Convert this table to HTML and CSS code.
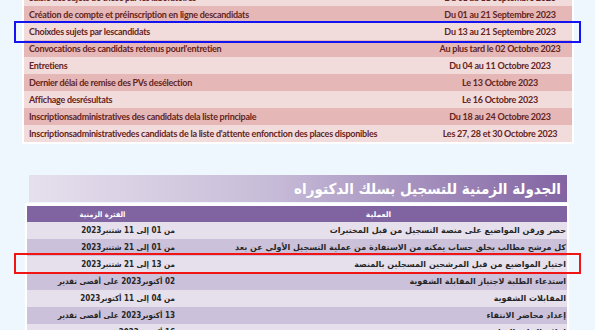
FILE: index.html
```html
<!DOCTYPE html>
<html lang="fr">
<head>
<meta charset="utf-8">
<link rel="stylesheet" href="styles.css">
</head>
<body>
<div class="fr-panel">
  <div class="fr-row light"><span class="op">Saisie des sujets de thèse par les laboratoires</span><span class="dt">Du 01 au 11 Septembre 2023</span></div>
  <div class="fr-row dark"><span class="op">Création de compte et préinscription en ligne descandidats</span><span class="dt">Du 01 au 21 Septembre 2023</span></div>
  <div class="fr-row light"><span class="op">Choixdes sujets par lescandidats</span><span class="dt">Du 13 au 21 Septembre 2023</span></div>
  <div class="fr-row dark"><span class="op">Convocations des candidats retenus pourl'entretien</span><span class="dt">Au plus tard le 02 Octobre 2023</span></div>
  <div class="fr-row light"><span class="op">Entretiens</span><span class="dt">Du 04 au 11 Octobre 2023</span></div>
  <div class="fr-row dark"><span class="op">Dernier délai de remise des PVs desélection</span><span class="dt">Le 13 Octobre 2023</span></div>
  <div class="fr-row light"><span class="op">Affichage desrésultats</span><span class="dt">Le 16 Octobre 2023</span></div>
  <div class="fr-row dark"><span class="op">Inscriptionsadministratives des candidats dela liste principale</span><span class="dt">Du 18 au 24 Octobre 2023</span></div>
  <div class="fr-row light"><span class="op">Inscriptionsadministrativedes candidats de la liste d'attente enfonction des places disponibles</span><span class="dt">Les 27, 28 et 30 Octobre 2023</span></div>
</div>

<section class="ar-section" dir="rtl" lang="ar">
  <h2 class="ar-title">الجدولة الزمنية للتسجيل بسلك الدكتوراه</h2>
  <div class="ar-panel">
    <div class="ar-row head"><span class="op">العملية</span><span class="dt">الفترة الزمنية</span></div>
    <div class="ar-row light"><span class="op">حصر ورقن المواضيع على منصة التسجيل من قبل المختبرات</span><span class="dt">من 01 إلى 11 شتنبر2023</span></div>
    <div class="ar-row dark"><span class="op">كل مرشح مطالب بخلق حساب يمكنه من الاستفادة من عملية التسجيل الأولي عن بعد</span><span class="dt">من 01 إلى 21 شتنبر2023</span></div>
    <div class="ar-row light"><span class="op">اختيار المواضيع من قبل المرشحين المسجلين بالمنصة</span><span class="dt">من 13 إلى 21 شتنبر2023</span></div>
    <div class="ar-row dark"><span class="op">استدعاء الطلبة لاجتياز المقابلة الشفوية</span><span class="dt">02 أكتوبر2023 على أقصى تقدير</span></div>
    <div class="ar-row light"><span class="op">المقابلات الشفوية</span><span class="dt">من 04 إلى 11 أكتوبر2023</span></div>
    <div class="ar-row dark"><span class="op">إعداد محاضر الانتقاء</span><span class="dt">13 أكتوبر2023 على أقصى تقدير</span></div>
    <div class="ar-row light"><span class="op">إعلان النتائج النهائية</span><span class="dt">16 أكتوبر 2023</span></div>
  </div>
</section>

<div class="mark mark-blue"></div>
<div class="mark mark-red"></div>
</body>
</html>
```
FILE: styles.css
```css
html, body {
  margin: 0;
  padding: 0;
}
body {
  background: #eef6fe;
  width: 595px;
  height: 330px;
  overflow: hidden;
  position: relative;
}

.fr-panel {
  margin: -13px 0 0 22px;
  width: 548px;
  padding: 2px;
  background: #ffffff;
}
.fr-row {
  display: grid;
  grid-template-columns: 1fr 144px;
  align-items: center;
  height: 17px;
  font-family: Lato, "Open Sans", sans-serif;
  font-weight: 700;
  font-size: 9px;
  letter-spacing: -0.25px;
  color: #632423;
  white-space: nowrap;
}
.fr-row .op {
  padding-left: 5px;
  overflow: hidden;
}
.fr-row .dt {
  text-align: center;
}
.fr-row.light { background: #f2dbdb; }
.fr-row.dark { background: #e5b8b7; }

.ar-section {
  margin: 31px 0 0 25px;
  width: 544px;
}
.ar-title {
  margin: 0 2px 0 4px;
  height: 27px;
  line-height: 29px;
  padding-right: 6px;
  background: linear-gradient(to right, #e6e0ed, #c7bcd8 45%, #8264a3);
  color: #ffffff;
  font-family: "DejaVu Sans Condensed", "DejaVu Sans", sans-serif;
  font-weight: 700;
  font-size: 15px;
  white-space: nowrap;
  overflow: hidden;
}
.ar-panel {
  margin-top: 1px;
  background: #ffffff;
  padding: 3px 2px 0 2px;
}
.ar-row {
  display: grid;
  grid-template-columns: 389px 151px;
  align-items: center;
  height: 17px;
  font-family: "DejaVu Sans", sans-serif;
  font-weight: 700;
  font-size: 8px;
  color: #262626;
  white-space: nowrap;
}
.ar-row .op {
  padding-right: 1px;
  overflow: visible;
}
.ar-row .dt {
  padding-right: 3px;
  font-family: "DejaVu Sans Condensed", "DejaVu Sans", sans-serif;
}
.ar-row.head {
  height: 16px;
  background: #8064a2;
  color: #ffffff;
  font-size: 7.5px;
}
.ar-row.head .op {
  padding-right: 0;
  padding-left: 12px;
  text-align: center;
}
.ar-row.head .dt {
  padding-right: 0;
  text-align: center;
}
.ar-row.light { background: #e5e0ec; }
.ar-row.dark { background: #ccc1da; }

.mark {
  position: absolute;
  box-sizing: border-box;
  border: 2px solid;
}
.mark-blue {
  left: 14px;
  top: 21px;
  width: 567px;
  height: 22px;
  border-color: #1414f0;
}
.mark-red {
  left: 14px;
  top: 253px;
  width: 567px;
  height: 21px;
  border-color: #f01414;
}
```
